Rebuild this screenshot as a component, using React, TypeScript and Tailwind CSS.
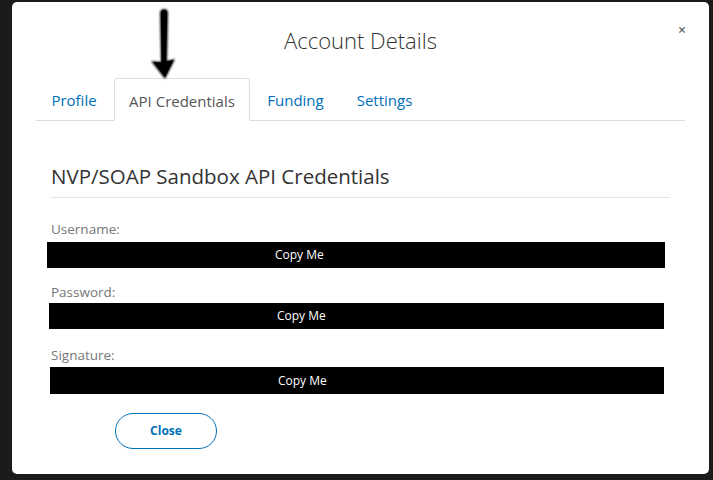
import React from "react";

const font = { fontFamily: '"Open Sans", "Noto Sans", sans-serif' };

function Bar({ className }: { className: string }) {
  return (
    <div className={`bg-black flex items-center text-white text-[12px] ${className}`}>
      <span className="pl-[228px] leading-none">Copy Me</span>
    </div>
  );
}

export default function App() {
  return (
    <div className="w-[713px] h-[480px] bg-[#1b1b1b] pt-[2px] pl-[12px] overflow-hidden" style={font}>
      <div className="relative w-[697px] h-[472px] bg-white rounded-[5px] px-[24px]">
        <svg className="absolute left-[132px] top-[2px]" width="32" height="78" viewBox="0 0 32 78">
          <defs>
            <filter id="b" x="-50%" y="-20%" width="200%" height="140%">
              <feGaussianBlur stdDeviation="0.9" />
            </filter>
          </defs>
          <path
            d="M20 5 C23 5 24 7 24 9 L23 57 L31 55 L21 75 L7 57 L17 58 L16 9 C16 6 18 5 20 5 Z"
            fill="#000"
            filter="url(#b)"
          />
          <path
            d="M20 6 C22.5 6 23 7.5 23 9 L22 57.5 L29.5 56 L21 73 L9.5 58 L17.5 58.5 L17 9 C17 7 18 6 20 6 Z"
            fill="#000"
          />
        </svg>
        <button className="absolute right-[23px] top-[21px] text-[#666] text-[14px] font-semibold leading-none">×</button>
        <div className="h-[76px] pt-[24px] text-center">
          <h1 className="text-[22px] leading-[28px] font-light text-[#333]">Account Details</h1>
        </div>
        <div className="flex h-[43px] border-b border-[#dddddd] text-[15px]">
          <div className="w-[76px] h-[42px] flex items-center justify-center text-[#0070ba] mr-[2px] pt-[3px]">Profile</div>
          <div className="w-[136px] h-[43px] flex items-center justify-center text-[#555] border border-[#dddddd] border-b-white rounded-t-[4px] mr-[2px] pt-[3px]">API Credentials</div>
          <div className="w-[87px] h-[42px] flex items-center justify-center text-[#0070ba] mr-[2px] pt-[3px]">Funding</div>
          <div className="w-[87px] h-[42px] flex items-center justify-center text-[#0070ba] pt-[3px]">Settings</div>
        </div>
        <div className="px-[15px] flex flex-col">
          <h2 className="mt-[41px] pb-[7px] border-b border-[#e5e5e5] text-[20.5px] leading-[28px] text-[#333]">
            NVP/SOAP Sandbox API Credentials
          </h2>
          <div className="mt-[22px] text-[13.5px] leading-[18px] text-[#777]">Username:</div>
          <Bar className="mt-[4px] ml-[-4px] w-[618px] h-[26px]" />
          <div className="mt-[15px] text-[13.5px] leading-[18px] text-[#777]">Password:</div>
          <Bar className="mt-[2px] ml-[-2px] w-[615px] h-[26px]" />
          <div className="mt-[17px] text-[13.5px] leading-[18px] text-[#777]">Signature:</div>
          <Bar className="mt-[3px] ml-[-1px] w-[614px] h-[27px]" />
          <button className="mt-[19px] ml-[64px] w-[102px] h-[36px] rounded-full border border-[#0070ba] text-[#0070ba] text-[12px] font-bold">
            Close
          </button>
        </div>
      </div>
    </div>
  );
}
